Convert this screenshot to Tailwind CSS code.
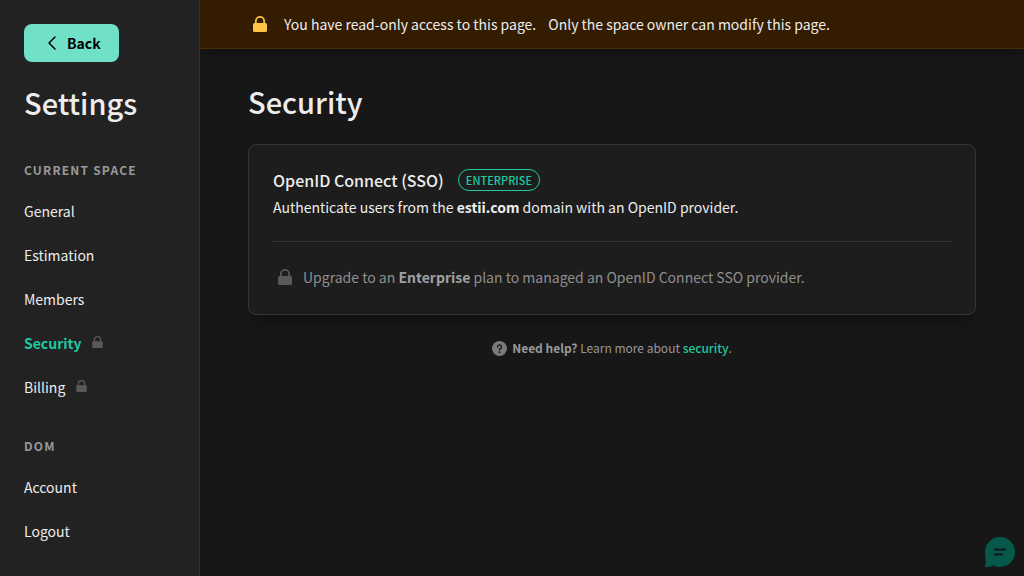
<!DOCTYPE html>
<html lang="en">
<head>
<meta charset="utf-8">
<meta name="viewport" content="width=device-width, initial-scale=1">
<title>Security settings</title>
<script src="https://cdn.jsdelivr.net/npm/@tailwindcss/browser@4"></script>
</head>
<body class="flex min-h-screen bg-[#171717] font-['Noto_Sans_CJK_SC','Noto_Sans',sans-serif] text-sm leading-6 text-[#ededed]">
<svg class="hidden" aria-hidden="true">
  <symbol id="lock" viewBox="0 0 14 16"><path fill-rule="evenodd" d="M2 7V5a5 5 0 0 1 10 0v2h.5A1.500 1.500 0 0 1 14 8.500v6a1.500 1.500 0 0 1-1.500 1.500h-11A1.500 1.500 0 0 1 0 14.500v-6A1.500 1.500 0 0 1 1.500 7zm1.700 0h6.600V5a3.300 3.300 0 0 0-6.600 0z"/></symbol>
</svg>
<aside class="relative z-10 w-50 shrink-0 border-r border-[#343434] bg-[#222] px-6 pt-6">
  <button type="button" class="flex h-[38px] items-center gap-[11px] rounded-lg bg-[#70e1c8] pr-[18px] pl-6 font-bold text-black">
    <svg class="h-3.5 w-2" viewBox="0 0 8 14" fill="none" stroke="currentColor" stroke-width="1.500" stroke-linecap="round" stroke-linejoin="round" aria-hidden="true"><path d="M7 1 1 7l6 6"/></svg>
    Back
  </button>
  <h1 class="mt-[22px] text-[29px] leading-9 font-medium">Settings</h1>
  <h2 class="mt-[38px] text-xs leading-6 font-bold tracking-widest text-[#999]">CURRENT SPACE</h2>
  <nav class="mt-[7px] leading-11" aria-label="Current space">
    <a href="#" class="block">General</a>
    <a href="#" class="block">Estimation</a>
    <a href="#" class="block">Members</a>
    <a href="#" class="flex items-center gap-[11px] font-bold text-[#20c9a0]" aria-current="page">Security <svg class="mb-0.5 h-3 w-[11px] fill-[#595959]" aria-hidden="true"><use href="#lock"/></svg></a>
    <a href="#" class="flex items-center gap-[11px]">Billing <svg class="mb-0.5 h-3 w-[11px] fill-[#595959]" aria-hidden="true"><use href="#lock"/></svg></a>
  </nav>
  <h2 class="mt-[25px] text-xs leading-6 font-bold tracking-widest text-[#999]">DOM</h2>
  <nav class="mt-[7px] leading-11" aria-label="Account">
    <a href="#" class="block">Account</a>
    <a href="#" class="block">Logout</a>
  </nav>
</aside>
<main class="min-w-0 flex-1">
  <div role="status" class="flex min-h-[49px] items-center gap-[17px] border-b border-[#4a2a02] bg-[#331c00] px-[53px] shadow-lg shadow-black/20">
    <svg class="h-4 w-3.5 shrink-0 fill-[#ffc543]" aria-hidden="true"><use href="#lock"/></svg>
    <p class="flex flex-wrap gap-x-3"><span>You have read-only access to this page.</span><span>Only the space owner can modify this page.</span></p>
  </div>
  <div class="px-12 pt-[34px]">
    <h1 class="text-[29px] leading-9 font-medium">Security</h1>
    <section class="mt-[25px] rounded-lg border border-[#343434] bg-[#1d1d1d] px-6 pt-[23px] pb-[25px] shadow-lg shadow-black/20">
      <div class="flex items-center gap-3.5">
        <h2 class="text-base leading-6 font-medium">OpenID Connect (SSO)</h2>
        <span class="rounded-full border border-[#20c9a0] px-[7px] text-[11px] leading-5 font-medium text-[#20c9a0]">ENTERPRISE</span>
      </div>
      <p class="mt-[3px] leading-6">Authenticate users from the <strong>estii.com</strong> domain with an OpenID provider.</p>
      <hr class="mt-[22px] border-[#343434]">
      <p class="mt-[23px] flex items-center gap-[11px] pl-[5px] text-[#8f8f8f]">
        <svg class="h-4 w-3.5 shrink-0 fill-[#595959]" aria-hidden="true"><use href="#lock"/></svg>
        <span>Upgrade to an <strong class="text-[#a0a0a0]">Enterprise</strong> plan to managed an OpenID Connect SSO provider.</span>
      </p>
    </section>
    <p class="mt-[21px] flex items-center justify-center gap-[5px] text-xs leading-6 text-[#999]">
      <svg class="size-[15px] shrink-0" viewBox="0 0 16 16" aria-hidden="true"><circle cx="8" cy="8" r="8" fill="#7a7a7a"/><path d="M5.900 6.300a2.100 2.100 0 1 1 3.100 1.800c-.7.400-1 .7-1 1.400" fill="none" stroke="#171717" stroke-width="1.500" stroke-linecap="round"/><circle cx="8" cy="11.900" r="1" fill="#171717"/></svg>
      <span><strong>Need help?</strong> Learn more about <a href="#" class="font-medium text-[#20c9a0]">security</a>.</span>
    </p>
  </div>
</main>
<button type="button" aria-label="Open chat" class="fixed right-[9px] bottom-[9px] size-[30px]">
  <svg class="size-full" viewBox="0 0 30 30" aria-hidden="true"><path fill="#06594a" d="M15 0a15 15 0 1 1-6.500 28.500C6 29.800 3 30 .3 30c-.5 0-.4-.5-.2-.9C1 27 .5 24 .3 20.500.1 18.500 0 17 0 15A15 15 0 0 1 15 0z"/><path d="M10 12.500h10M10 17.500h7" stroke="#171717" stroke-width="2.200" stroke-linecap="round"/></svg>
</button>
</body>
</html>
